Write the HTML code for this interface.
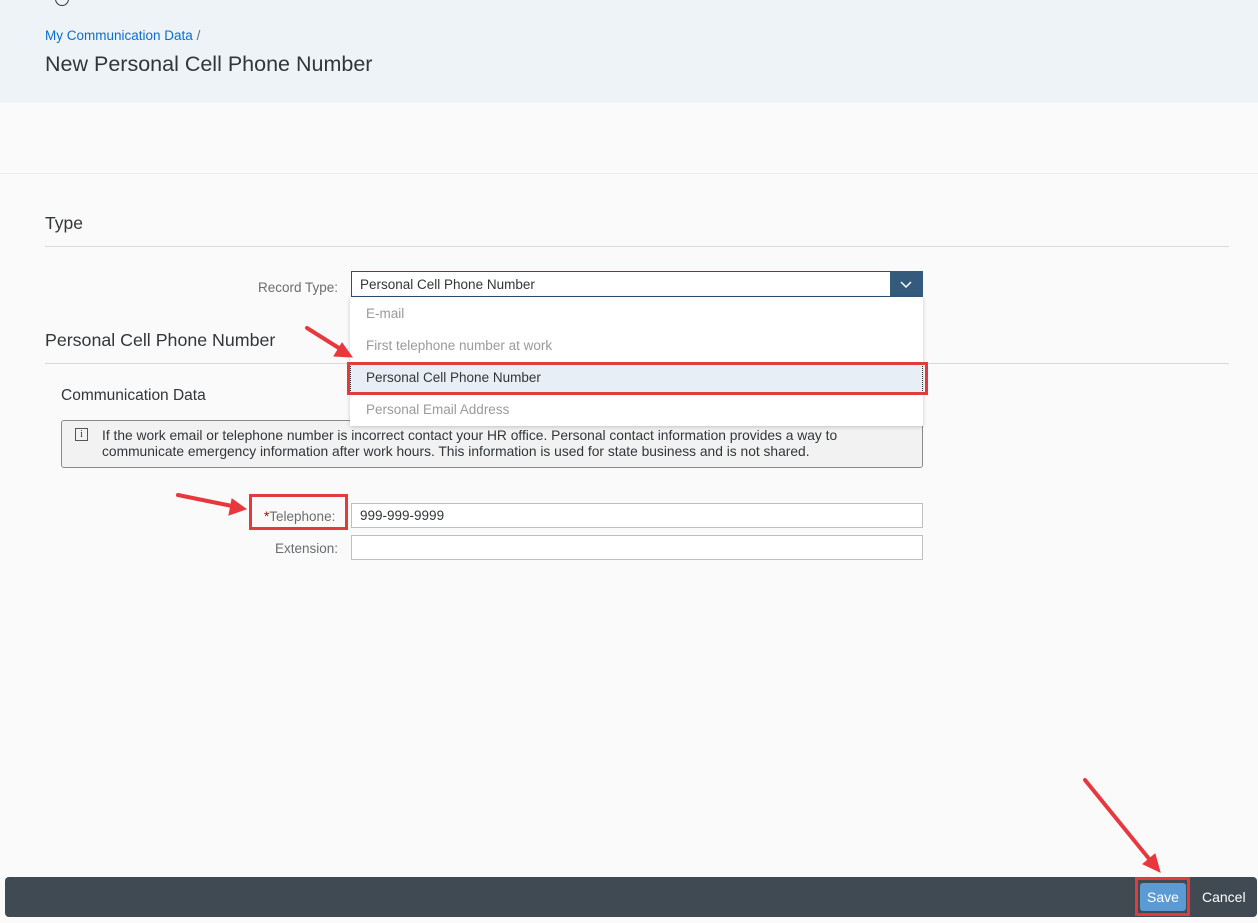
<!DOCTYPE html>
<html><head><meta charset="utf-8"><style>
*{box-sizing:border-box;margin:0;padding:0}
body{width:1258px;height:923px;background:#fafafa;font-family:"Liberation Sans",sans-serif;position:relative;overflow:hidden;color:#32363a}
.abs{position:absolute}
.hdr{left:0;top:0;width:1258px;height:103px;background:#eef3f8}
.t{font-size:13px;white-space:nowrap}
input,.inp{position:absolute;background:#fff;border:1px solid #bfbfbf;height:26px;font-size:13.5px;padding:4px 8px;color:#32363a}
.hr{height:1px;background:#d9d9d9}
.opt{position:absolute;left:16px;font-size:13.5px;color:#9a9a9a}
</style></head><body>
<div class="abs hdr"></div>
<div class="abs" style="left:55px;top:-8px;width:14px;height:14px;border:1.5px solid #333;border-radius:50%"></div>
<div class="abs t" style="left:45px;top:28px;color:#0a6ed1;font-size:13.5px">My Communication Data <span style="color:#6a6d70">/</span></div>
<div class="abs" style="left:45px;top:52px;font-size:21.5px;color:#32363a">New Personal Cell Phone Number</div>
<div class="abs hr" style="left:0;top:173px;width:1258px;background:#eeeeee"></div>
<div class="abs" style="left:45px;top:213px;font-size:17.5px">Type</div>
<div class="abs hr" style="left:45px;top:246px;width:1184px"></div>
<div class="abs t" style="left:258px;top:280px;color:#6a6d70;font-size:13.5px">Record Type:</div>
<div class="inp" style="left:351px;top:271px;width:572px;border-color:#2f4f6f;padding-top:5px">Personal Cell Phone Number</div>
<div class="abs" style="left:890px;top:271px;width:33px;height:26px;background:#345a7c"><svg width="33" height="26"><path d="M11 11l5 5 5-5" stroke="#fff" stroke-width="1.5" fill="none"/></svg></div>
<div class="abs" style="left:45px;top:330px;font-size:17.8px">Personal Cell Phone Number</div>
<div class="abs hr" style="left:45px;top:363px;width:1184px"></div>
<div class="abs" style="left:61px;top:387px;font-size:15.5px">Communication Data</div>
<div class="abs" style="left:61px;top:420px;width:862px;height:48px;background:#f2f2f2;border:1px solid #8a8a8a;border-radius:3px"></div>
<div class="abs" style="left:75px;top:428px;width:13px;height:13px;border:1px solid #555;font-size:10px;text-align:center;line-height:11px;font-family:'Liberation Serif',serif">i</div>
<div class="abs t" style="left:102px;top:428px;line-height:16px;color:#32363a;font-size:13.8px">If the work email or telephone number is incorrect contact your HR office. Personal contact information provides a way to<br>communicate emergency information after work hours. This information is used for state business and is not shared.</div>
<div class="abs" style="left:350px;top:297px;width:573px;height:129px;background:#fff;box-shadow:0 1px 4px rgba(0,0,0,.2)">
<div class="opt" style="top:9px">E-mail</div>
<div class="opt" style="top:41px">First telephone number at work</div>
<div class="abs" style="left:0;top:66px;width:573px;height:32px;background:#e8eef5;border:1px dotted #333"></div>
<div class="opt" style="top:73px;color:#32363a">Personal Cell Phone Number</div>
<div class="opt" style="top:105px">Personal Email Address</div>
</div>
<div class="abs" style="left:347px;top:362px;width:581px;height:33px;border:3px solid #e03c3c"></div>
<div class="abs t" style="left:264px;top:509px;color:#6a6d70;font-size:13.5px"><span style="color:#bb0000">*</span>Telephone:</div>
<div class="abs" style="left:249px;top:494px;width:99px;height:36px;border:3px solid #e03c3c"></div>
<div class="inp" style="left:351px;top:503px;width:572px;height:25px">999-999-9999</div>
<div class="abs t" style="left:275px;top:541px;color:#6a6d70;font-size:13.5px">Extension:</div>
<div class="inp" style="left:351px;top:535px;width:572px;height:25px"></div>
<div class="abs" style="left:5px;top:877px;width:1252px;height:40px;background:#3f4a53;border-radius:4px"></div>
<div class="abs" style="left:1140px;top:883px;width:46px;height:28px;background:#5b9bd5;border-radius:3px;color:#fff;font-size:14px;text-align:center;line-height:28px">Save</div>
<div class="abs" style="left:1135px;top:877px;width:55px;height:39px;border:3px solid #e03c3c"></div>
<div class="abs" style="left:1202px;top:889px;color:#fff;font-size:14px">Cancel</div>
<svg class="abs" style="left:0;top:0" width="1258" height="923">
<g stroke="#e8383d" stroke-width="4" fill="#e8383d" stroke-linecap="round">
<line x1="307" y1="328" x2="342" y2="350"/><polygon points="352,357 334,356 342,343" stroke-width="1"/>
<line x1="178" y1="495" x2="232" y2="506"/><polygon points="246,509 229,515 232,499" stroke-width="1"/>
<line x1="1085" y1="780" x2="1150" y2="860"/><polygon points="1160,872 1143,864 1155,854" stroke-width="1"/>
</g></svg>
</body></html>
